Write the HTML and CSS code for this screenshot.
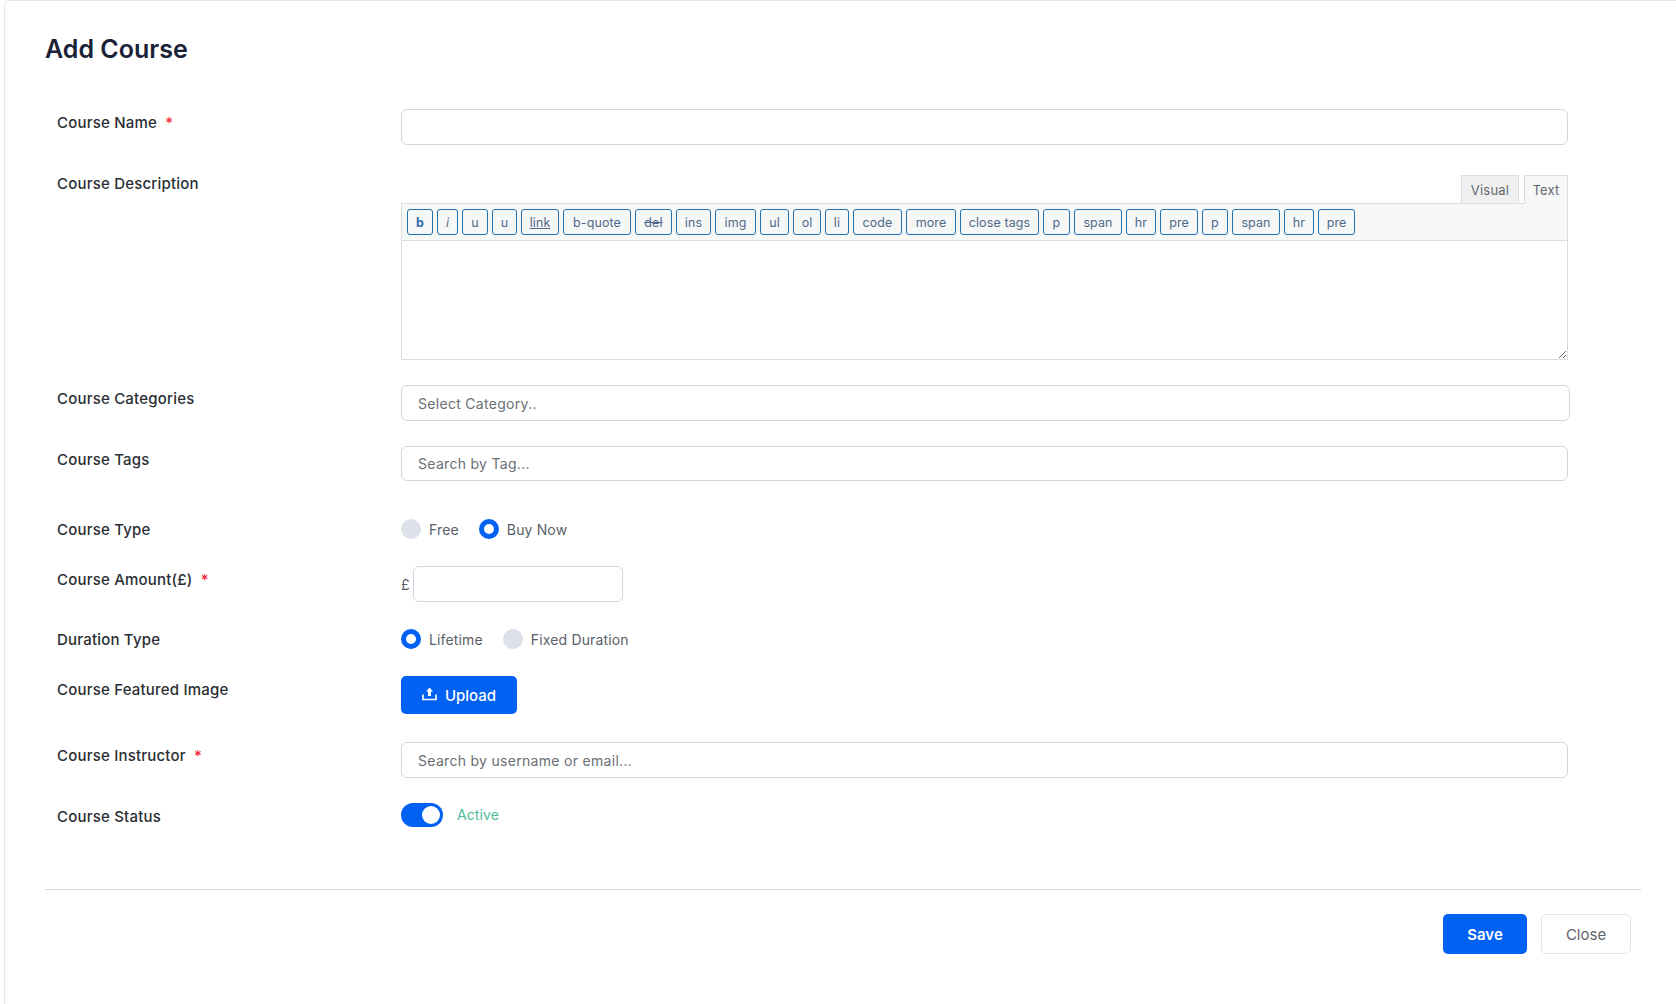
FILE: index.html
```html
<!DOCTYPE html>
<html lang="en">
<head>
  <meta charset="UTF-8">
  <title>Add Course</title>
  <link rel="stylesheet" href="styles.css">
</head>
<body>

  <div class="panel">
    <h1>Add Course</h1>

    <form class="course-form">
      <div class="row row-name">
        <label class="row-label">Course Name <span class="req">*</span></label>
        <input class="text-input" type="text">
      </div>

      <div class="row row-desc">
        <label class="row-label">Course Description</label>
        <div class="editor">
          <div class="editor-tabs">
            <span class="tab tab-visual">Visual</span>
            <span class="tab tab-active">Text</span>
          </div>
          <div class="toolbar">
            <button type="button" class="tool tool-bold">b</button>
            <button type="button" class="tool tool-italic">i</button>
            <button type="button" class="tool">u</button>
            <button type="button" class="tool">u</button>
            <button type="button" class="tool tool-link">link</button>
            <button type="button" class="tool">b-quote</button>
            <button type="button" class="tool tool-del">del</button>
            <button type="button" class="tool">ins</button>
            <button type="button" class="tool">img</button>
            <button type="button" class="tool">ul</button>
            <button type="button" class="tool">ol</button>
            <button type="button" class="tool">li</button>
            <button type="button" class="tool">code</button>
            <button type="button" class="tool">more</button>
            <button type="button" class="tool">close tags</button>
            <button type="button" class="tool">p</button>
            <button type="button" class="tool">span</button>
            <button type="button" class="tool">hr</button>
            <button type="button" class="tool">pre</button>
            <button type="button" class="tool">p</button>
            <button type="button" class="tool">span</button>
            <button type="button" class="tool">hr</button>
            <button type="button" class="tool">pre</button>
          </div>
          <textarea class="editor-area"></textarea>
        </div>
      </div>

      <div class="row row-cat">
        <label class="row-label">Course Categories</label>
        <input class="text-input input-cat" type="text" placeholder="Select Category..">
      </div>

      <div class="row row-tags">
        <label class="row-label">Course Tags</label>
        <input class="text-input input-tags" type="text" placeholder="Search by Tag...">
      </div>

      <div class="row row-type">
        <label class="row-label">Course Type</label>
        <div class="radios">
          <label class="radio"><input type="radio" name="type"> Free</label>
          <label class="radio"><input type="radio" name="type" checked> Buy Now</label>
        </div>
      </div>

      <div class="row row-amount">
        <label class="row-label">Course Amount(£) <span class="req">*</span></label>
        <div class="amount">
          <span class="currency">£</span>
          <input class="text-input" type="text">
        </div>
      </div>

      <div class="row row-duration">
        <label class="row-label">Duration Type</label>
        <div class="radios">
          <label class="radio"><input type="radio" name="duration" checked> Lifetime</label>
          <label class="radio"><input type="radio" name="duration"> Fixed Duration</label>
        </div>
      </div>

      <div class="row row-image">
        <label class="row-label">Course Featured Image</label>
        <div>
          <button type="button" class="btn btn-upload">
            <svg width="15" height="14" viewBox="0 0 15 14" fill="none">
              <path d="M7.5 0.5 L11 4.5 H9 V9 H6 V4.5 H4 Z" fill="#fff"/>
              <path d="M1 7.5 V12.5 H14 V7.5" stroke="#fff" stroke-width="1.6"/>
            </svg>
            Upload
          </button>
        </div>
      </div>

      <div class="row row-instructor">
        <label class="row-label">Course Instructor <span class="req">*</span></label>
        <input class="text-input" type="text" placeholder="Search by username or email...">
      </div>

      <div class="row row-status">
        <label class="row-label">Course Status</label>
        <div class="status">
          <span class="toggle"><span class="knob"></span></span>
          <span class="status-text">Active</span>
        </div>
      </div>
    </form>

    <div class="form-actions">
      <button type="button" class="btn btn-save">Save</button>
      <button type="button" class="btn btn-close">Close</button>
    </div>
  </div>

</body>
</html>
```

FILE: styles.css
```css
* {
  box-sizing: border-box;
}

body {
  font-family: Inter, 'Noto Sans', sans-serif;
  background: #fff;
  margin: 0;
  color: #212529;
}

.panel {
  margin-left: 4px;
  min-height: 100vh;
  padding: 0 35px 0 40px;
  border-top: 1px solid #e4e7ef;
  border-left: 1px solid #e4e7ef;
  border-top-left-radius: 6px;
}

h1 {
  margin: 0;
  padding-top: 32px;
  height: 108px;
  font-size: 25px;
  line-height: 32px;
  font-weight: 600;
  color: #1a2238;
}

.course-form {
  padding-left: 12px;
}

.row {
  display: grid;
  grid-template-columns: 344px 1167px;
}

.row-label {
  font-size: 15px;
  line-height: 24px;
  font-weight: 500;
  color: #2a2e33;
  padding-top: 2px;
  letter-spacing: 0.2px;
}

.req {
  color: #f1283c;
  margin-left: 4px;
}

.row-desc { margin-top: 30px; }
.row-desc .row-label { margin-top: -5px; }
.row-cat { margin-top: 25px; }
.row-tags { margin-top: 25px; }
.row-type { margin-top: 37px; }
.row-type .row-label { padding-top: 0; }
.row-amount { margin-top: 24px; }
.row-duration { margin-top: 26px; }
.row-duration .row-label { padding-top: 0; }
.row-image { margin-top: 24px; }
.row-instructor { margin-top: 28px; }
.row-status { margin-top: 25px; }

.text-input {
  display: block;
  width: 100%;
  height: 36px;
  padding: 0 16px;
  border: 1px solid #d3d5d9;
  border-radius: 6px;
  background: #fff;
  font-family: inherit;
  font-size: 14px;
  letter-spacing: 0.3px;
  color: #495057;
}

.text-input::placeholder {
  color: #6a6f76;
  opacity: 1;
}

.input-cat {
  width: 1169px;
}

.input-tags {
  height: 35px;
}

.editor {
  font-size: 13px;
}

.editor-tabs {
  display: flex;
  justify-content: flex-end;
  gap: 5px;
  height: 28px;
}

.tab {
  height: 29px;
  line-height: 28px;
  text-align: center;
  border: 1px solid #dcdcde;
  background: #f0f0f1;
  color: #646970;
  letter-spacing: 0.2px;
  position: relative;
}

.tab-visual {
  width: 58px;
}

.tab-active {
  width: 44px;
  background: #f6f7f7;
  border-bottom-color: #f6f7f7;
}

.toolbar {
  display: grid;
  grid-template-columns: 26px 21px 26px 25px 38px 68px 37px 35px 41px 29px 28px 24px 49px 50px 79px 27px 48px 30px 38px 26px 48px 30px 37px;
  grid-auto-flow: column;
  gap: 4px;
  height: 38px;
  padding: 5px 5px;
  background: #f6f7f7;
  border: 1px solid #dcdcde;
}

.tool {
  height: 26px;
  padding: 0;
  border: 1px solid #2271b1;
  border-radius: 3px;
  background: #f6f7f7;
  color: #50698a;
  font-family: inherit;
  font-size: 12.5px;
  letter-spacing: 0.1px;
}

.tool-bold {
  font-weight: 700;
  color: #2f6ba8;
}

.tool-italic {
  font-style: italic;
}

.tool-link {
  text-decoration: underline;
}

.tool-del {
  text-decoration: line-through;
}

.editor-area {
  display: block;
  width: 100%;
  height: 119px;
  margin: 0;
  border: 1px solid #dcdcde;
  border-top: none;
  background: #fff;
  outline: none;
}

.radios {
  display: flex;
  gap: 20px;
  padding-top: 1px;
}

.radio {
  display: flex;
  align-items: center;
  gap: 8px;
  height: 20px;
  font-size: 14px;
  letter-spacing: 0.15px;
  color: #5a6068;
}

.radio input {
  appearance: none;
  width: 20px;
  height: 20px;
  margin: 0;
  border-radius: 50%;
  background: #dde1ea;
}

.radio input:checked {
  background: #fff;
  border: 5px solid #0061f2;
}

.amount {
  display: flex;
  align-items: center;
  gap: 4px;
}

.amount .text-input {
  width: 210px;
}

.currency {
  font-size: 14px;
  color: #5a6068;
  width: 8px;
}

.btn {
  border-radius: 5px;
  font-family: inherit;
  font-size: 15px;
  cursor: pointer;
}

.btn-upload {
  display: flex;
  align-items: center;
  justify-content: center;
  gap: 8px;
  width: 116px;
  height: 38px;
  border: none;
  background: #0061f2;
  color: #fff;
  font-weight: 500;
}

.btn-upload svg {
  margin-top: -3px;
}

.status {
  display: flex;
  align-items: center;
  gap: 14px;
  height: 24px;
}

.toggle {
  display: flex;
  align-items: center;
  justify-content: flex-end;
  width: 42px;
  height: 24px;
  padding-right: 3px;
  border-radius: 12px;
  background: #0061f2;
}

.knob {
  width: 18px;
  height: 18px;
  border-radius: 50%;
  background: #fff;
}

.status-text {
  font-size: 14px;
  letter-spacing: 0.1px;
  color: #4dbd98;
  margin-top: -2px;
}

.form-actions {
  display: flex;
  justify-content: flex-end;
  gap: 14px;
  margin-top: 60px;
  padding: 24px 10px 0 0;
  border-top: 1px solid #d8d9dc;
}

.btn-save {
  width: 84px;
  height: 40px;
  border: none;
  background: #0061f2;
  color: #fff;
  font-weight: 600;
}

.btn-close {
  width: 90px;
  height: 40px;
  border: 1px solid #e2e3e6;
  background: #fff;
  color: #5f6368;
}
```
